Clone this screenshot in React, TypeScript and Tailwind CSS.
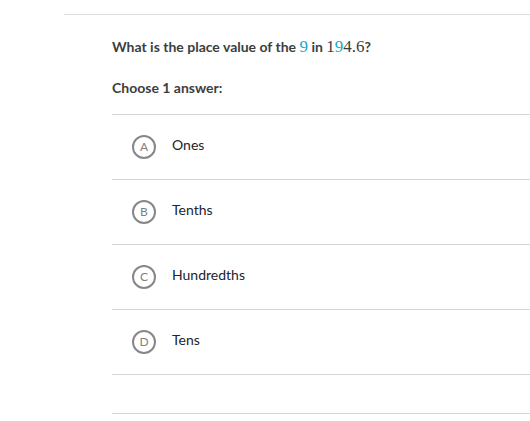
import React from 'react';

const choices = [
  { letter: 'A', text: 'Ones' },
  { letter: 'B', text: 'Tenths' },
  { letter: 'C', text: 'Hundredths' },
  { letter: 'D', text: 'Tens' },
];

export default function App() {
  return (
    <div className="min-h-[421px] bg-white pt-[14px] font-['Lato',sans-serif] text-[#21242c]">
      <div className="ml-[64px] border-t border-[#dcdcdc] pl-[48px]">
        <p className="mt-[22px] text-[14px] font-bold leading-[20px] text-[#3b3e40]">
          What is the place value of the{' '}
          <span className="font-['Liberation_Serif',serif] text-[17px] font-normal leading-[20px] text-[#11accd]">9</span>
          {' '}in{' '}
          <span className="font-['Liberation_Serif',serif] text-[17px] font-normal leading-[20px]">
            1<span className="text-[#11accd]">9</span>4.6
          </span>
          ?
        </p>
        <p className="mt-[21px] text-[14px] font-bold leading-[20px] text-[#3b3e40]">Choose 1 answer:</p>
        <ul className="mt-[16px] border-t border-[#d4d4d4]">
          {choices.map((c) => (
            <li key={c.letter} className="flex h-[65px] items-center border-b border-[#d4d4d4] pl-[20px]">
              <span className="flex h-[24px] w-[24px] shrink-0 items-center justify-center rounded-full border-2 border-[#85878a] text-[12px] font-normal leading-none text-[#7d7f82]">
                {c.letter}
              </span>
              <span className="ml-[16px] -mt-[5px] text-[14px] text-[#21242c]">{c.text}</span>
            </li>
          ))}
        </ul>
        <div className="mt-[38px] border-t border-[#d4d4d4]" />
      </div>
    </div>
  );
}
